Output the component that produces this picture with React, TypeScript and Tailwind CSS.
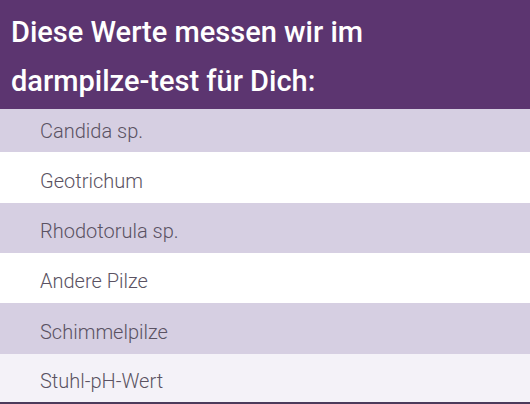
const items = [
  { label: "Candida sp.", bg: "bg-[#d6cfe2]", h: "h-[43px] pt-[1px]" },
  { label: "Geotrichum", bg: "bg-white", h: "h-[51px] pt-[6px]" },
  { label: "Rhodotorula sp.", bg: "bg-[#d6cfe2]", h: "h-[50px] pt-[6px]" },
  { label: "Andere Pilze", bg: "bg-white", h: "h-[50px] pt-[6px]" },
  { label: "Schimmelpilze", bg: "bg-[#d6cfe2]", h: "h-[51px] pt-[6px]" },
  { label: "Stuhl-pH-Wert", bg: "bg-[#f4f2f8]", h: "h-[48px] pt-[6px]" },
];

export default function App() {
  return (
    <main className="w-[530px] h-[404px] overflow-hidden bg-white font-['Roboto',sans-serif]">
      <header className="h-[109px] bg-[#5c3570] px-[11px] pt-[8px]">
        <h1 className="text-[29px] leading-[49px] font-medium text-white">
          Diese Werte messen wir im
          <br />
          darmpilze-test für Dich:
        </h1>
      </header>
      <ul>
        {items.map((it) => (
          <li key={it.label} className={`${it.bg} ${it.h} flex items-center pl-[40px]`}>
            <span className="text-[20px] font-light text-[#5a5262]">{it.label}</span>
          </li>
        ))}
      </ul>
      <div className="h-[2px] bg-[#4b3b5b]" />
    </main>
  );
}
